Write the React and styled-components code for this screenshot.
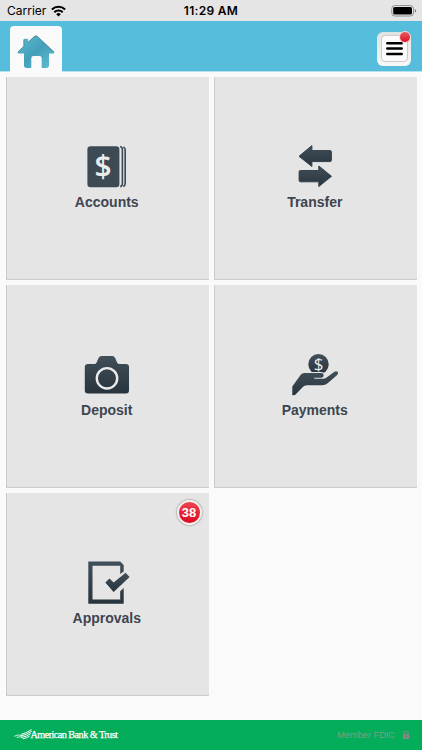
import styled, { createGlobalStyle } from "styled-components"

export default function App() {
  return (
    <Screen>
      <GlobalStyle />
      <StatusBar>
        <Carrier>
          Carrier
          <WifiIcon />
        </Carrier>
        <Clock>11:29 AM</Clock>
        <BatteryIcon />
      </StatusBar>

      <Header>
        <HomeTab>
          <HomeIcon />
        </HomeTab>
        <MenuButton>
          <MenuFace>
            <MenuIcon />
          </MenuFace>
          <Dot />
        </MenuButton>
      </Header>

      <InkGradient />
      <Grid>
        {tiles.map(({ label, icon, count }) => (
          <Tile key={label}>
            <TileIcon viewBox="0 0 60 46">{icon}</TileIcon>
            <Label>{label}</Label>
            {count && <Badge>{count}</Badge>}
          </Tile>
        ))}
      </Grid>

      <Footer>
        <Bank>
          <EagleIcon />
          American Bank &amp; Trust
        </Bank>
        <Member>
          Member FDIC
          <LockIcon />
        </Member>
      </Footer>
    </Screen>
  )
}

// shared fill for the tile icons
function InkGradient() {
  return (
    <svg width="0" height="0">
      <defs>
        <linearGradient id="ink" x1="0" y1="0" x2="0" y2="1">
          <stop offset="0" stopColor="#414f59" />
          <stop offset="1" stopColor="#28343d" />
        </linearGradient>
      </defs>
    </svg>
  )
}

function WifiIcon() {
  return (
    <svg width="15" height="12" viewBox="0 0 15 12">
      <g fill="none" stroke="#000" strokeWidth="2.1">
        <path d="M.9 4.500a9.400 9.400 0 0 1 13.200 0" />
        <path d="M3.300 7.200a6 6 0 0 1 8.400 0" />
      </g>
      <path d="M7.500 11.500 5.200 9.200a3.300 3.300 0 0 1 4.600 0z" />
    </svg>
  )
}

function BatteryIcon() {
  return (
    <svg width="26" height="12" viewBox="0 0 26 12">
      <rect x=".8" y=".6" width="21.6" height="10.4" rx="3" fill="#eee" stroke="#8b8b8b" />
      <rect x="2.2" y="2" width="18.8" height="7.6" rx="1.5" />
      <path d="M23.800 4.300q1.400.3 1.400 1.600t-1.400 1.600z" fill="#777" />
    </svg>
  )
}

function MenuIcon() {
  return (
    <svg width="17" height="15" viewBox="0 0 17 15">
      <path
        d="M1.300 2.200h14.400M1.300 7.600h14.400M1.300 13h14.400"
        stroke="#000"
        strokeWidth="2.5"
        strokeLinecap="round"
      />
    </svg>
  )
}

function HomeIcon() {
  return (
    <svg width="38" height="34" viewBox="0 0 38 34">
      <defs>
        <linearGradient id="roof" x1="0" y1="0" x2="1" y2="1">
          <stop offset="0" stopColor="#61bad1" />
          <stop offset=".5" stopColor="#439fb8" />
          <stop offset="1" stopColor="#61bfd7" />
        </linearGradient>
      </defs>
      <path
        d="M17.300 1.200q1.600-1.300 3.200 0L37.200 17q.8 1.400-.8 1.400H32v11.900q0 2.700-2.700 2.700h-4.600V23.200q0-2.200-2.200-2.200h-6q-2.200 0-2.200 2.200V33H9.700Q7 33 7 30.300V18.400H1.500Q0 18.400.8 17L6.700 11.300V4.800q0-1 1-1h2.500q1 0 1 1V7z"
        fill="url(#roof)"
      />
      <path
        d="M1 16.900 6.900 11.200V4.600M11.300 7l6-5.400q1.600-1.300 3.200 0L37 17"
        fill="none"
        stroke="#3c7f91"
        strokeWidth=".7"
      />
    </svg>
  )
}

function EagleIcon() {
  return (
    <svg width="18" height="12" viewBox="0 0 18 12">
      <g fill="none" stroke="#fff" strokeLinecap="round">
        <path d="M7.500 5.300Q12 4.300 17.300.8" />
        <path d="M7.200 6.900Q13 5.700 17.300 2.600" />
        <path d="M7.500 8.500Q13 7.500 16.500 4.800" />
        <path d="M9 9.800Q13 9.100 15.300 7.200" />
        <path d="M.6 7.100Q3.500 5 7 6.300M3 8.300l4.500-.6" strokeWidth=".8" />
      </g>
    </svg>
  )
}

function LockIcon() {
  return (
    <svg width="8" height="10" viewBox="0 0 8 10">
      <path d="M2 4.500V3a2 2 0 0 1 4 0v1.500" fill="none" stroke="#858a85" strokeWidth="1.2" />
      <rect x=".8" y="4.2" width="6.4" height="4.8" rx=".7" fill="#858a85" />
      <rect x="3.4" y="5.6" width="1.2" height="1.8" fill="#4f7a62" />
    </svg>
  )
}

const GlobalStyle = createGlobalStyle`
  * {
    box-sizing: border-box;
  }
  body {
    margin: 0;
    background: #fafafa;
  }
  svg {
    display: block;
    flex: none;
  }
`
const Screen = styled.div`
  display: flex;
  flex-direction: column;
  width: 422px;
  height: 750px;
  overflow: hidden;
  background: #fafafa;
  font-family: "Liberation Sans", Arial, sans-serif;
`
const StatusBar = styled.div`
  display: grid;
  grid-template-columns: 1fr auto 1fr;
  align-items: center;
  height: 21px;
  padding: 1px 5px 0 7px;
  background: #e5e5e5;
  color: #000;
  font: 12px/20px Inter, sans-serif;

  > :last-child {
    justify-self: end;
  }
`
const Carrier = styled.div`
  display: flex;
  align-items: center;
  gap: 5px;
`
const Clock = styled.div`
  margin-right: 2px;
  font-weight: 600;
  letter-spacing: 0.3px;
`
const Header = styled.header`
  display: flex;
  justify-content: space-between;
  height: 51px;
  padding: 5px 11px 0 10px;
  background: #56bedc;
  border-bottom: 1px solid #b5e1ee;
`
const HomeTab = styled.div`
  display: flex;
  justify-content: center;
  width: 52px;
  height: 46px;
  padding-top: 9px;
  border-radius: 4px 4px 0 0;
  background: #fafafa;
`
const MenuButton = styled.div`
  position: relative;
  width: 34px;
  height: 34px;
  margin-top: 6px;
  padding: 3px 3px 4px 4px;
  border-radius: 6px;
  background: linear-gradient(#e0e3e4, #f8f8f8);
`
const MenuFace = styled.div`
  display: flex;
  align-items: center;
  justify-content: center;
  height: 27px;
  border: 1px solid #d2c9c9;
  border-radius: 4px;
  background: #fcfcfc;
`
const Dot = styled.div`
  position: absolute;
  top: -1px;
  right: 0;
  width: 12px;
  height: 12px;
  border: 1px solid #f3dada;
  border-radius: 50%;
  background: linear-gradient(#ee5960, #d91428);
`
const Grid = styled.main`
  display: grid;
  grid-template-columns: 203px 203px;
  grid-auto-rows: 203px;
  align-content: start;
  gap: 5px;
  flex: 1;
  padding: 5px 5px 5px 5.5px;
`
const Tile = styled.div`
  position: relative;
  display: flex;
  flex-direction: column;
  align-items: center;
  padding-top: 68px;
  border: solid #cbcbcb;
  border-width: 0 0 1px 1px;
  background: #e5e5e5;
`
const TileIcon = styled.svg`
  width: 60px;
  height: 46px;
  margin-right: 1px;
`
const Dollar = styled.text`
  font: ${({ $weight }) => $weight} ${({ $size }) => $size}px "Open Sans", sans-serif;
  fill: #ececec;
  text-anchor: middle;
`
const Label = styled.div`
  margin: 3px 1.5px 0 0;
  color: #3d4650;
  font-size: 14px;
  font-weight: bold;
  line-height: 16px;
`
const Badge = styled.div`
  position: absolute;
  top: 7px;
  right: 7px;
  width: 25px;
  height: 25px;
  border: 2px solid #f5eeee;
  border-radius: 50%;
  background: linear-gradient(#ee4450, #db0a20);
  box-shadow: 0 0 2px rgba(0, 0, 0, 0.6);
  color: #fff;
  font-size: 13px;
  font-weight: bold;
  line-height: 21px;
  text-align: center;
`
const Footer = styled.footer`
  display: flex;
  align-items: center;
  justify-content: space-between;
  height: 30px;
  padding: 0 12px 0 14px;
  background: #04ad59;
`
const Bank = styled.div`
  display: flex;
  align-items: center;
  color: #fff;
  font: 10.2px/16px "Liberation Serif", serif;
  letter-spacing: -0.54px;
  white-space: nowrap;
  -webkit-text-stroke: 0.25px #fff;

  svg {
    margin-right: -1.5px;
  }
`
const Member = styled.div`
  display: flex;
  align-items: center;
  gap: 7px;
  color: #76a388;
  font-size: 9.2px;
`

const tiles = [
  {
    label: "Accounts",
    icon: (
      <>
        <rect x="10.4" y="1.2" width="32" height="41" rx="3.2" fill="#3d4a54" />
        <path
          d="M43.200 1.400q2.200.7 2.200 3.200v34q0 2.500-2.200 3.200M46.300 2q1.900.8 1.900 3v33.500q0 2.100-1.900 2.900"
          fill="none"
          stroke="#3d4a54"
          strokeWidth="1.6"
        />
        <Dollar x="26" y="32" $size={30} $weight={600}>
          $
        </Dollar>
      </>
    ),
  },
  {
    label: "Transfer",
    icon: (
      <g fill="url(#ink)" stroke="#35424c" strokeLinejoin="round">
        <path d="M14 11.300 26.900.6v5h18.200q1.300 0 1.300 1.300v8.400q0 1.300-1.300 1.300H26.900v4.900z" />
        <path d="M46.500 31.300 33.800 21v4.500H15.400q-1.300 0-1.300 1.300v8.700q0 1.300 1.300 1.300h18.400v4.800z" />
      </g>
    ),
  },
  {
    label: "Deposit",
    icon: (
      <>
        <path
          d="M11 11h6.300q1.600 0 2.300-1.500l2.100-4.700Q22.500 3 24.500 3h10.700q2 0 2.800 1.800l2.100 4.700q.7 1.500 2.300 1.500H49q3 0 3 3v23.400q0 3-3 3H11q-3.200 0-3.200-3V14q0-3 3.200-3z"
          fill="url(#ink)"
        />
        <circle cx="30" cy="25.3" r="10.2" fill="none" stroke="#ececec" strokeWidth="2.4" />
      </>
    ),
  },
  {
    label: "Payments",
    icon: (
      <>
        <circle cx="33.5" cy="11.2" r="10.2" fill="url(#ink)" />
        <Dollar x="33.5" y="17" $size={17} $weight={500}>
          $
        </Dollar>
        <path
          d="M7.300 33.600 15.700 21.800Q17 20 19.300 20h17q2.400 0 2.400 2.300T36.300 24.700H29.300v1.100h8.600q2 0 3.700-1.300l7.500-5.500q2.200-1.500 3.500-.2t-.4 3.100l-9.600 8.400q-2.300 2-5.400 2H21.500q-2 0-3.400 1.500l-7.300 7.500q-.8.900-2 .9H7.300z"
          fill="url(#ink)"
          stroke="#e5e5e5"
          strokeWidth="1.8"
          paintOrder="stroke"
        />
      </>
    ),
  },
  {
    label: "Approvals",
    icon: (
      <>
        <path
          d="M11.300.5h32l3.400 3.400v6.500L43.200 13V4.800H15.500v33.600h27.700V30.300l3.500-3.400v15.900H11.300z"
          fill="url(#ink)"
        />
        <path d="M28.300 21.500l4.200-4 4.200 4 11.900-9.700 4 4.300-16 14.800z" fill="url(#ink)" />
      </>
    ),
    count: 38,
  },
]
